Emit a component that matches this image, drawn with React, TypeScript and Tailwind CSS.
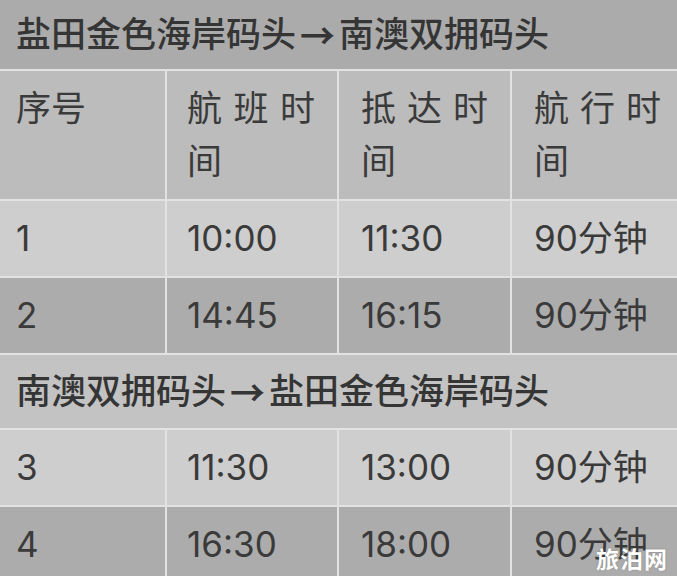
import React from 'react';

type Row = { no: string; dep: string; arr: string; dur: string; dark?: boolean };

const outbound: Row[] = [
  { no: '1', dep: '10:00', arr: '11:30', dur: '90分钟' },
  { no: '2', dep: '14:45', arr: '16:15', dur: '90分钟', dark: true },
];

const inbound: Row[] = [
  { no: '3', dep: '11:30', arr: '13:00', dur: '90分钟' },
  { no: '4', dep: '16:30', arr: '18:00', dur: '90分钟', dark: true },
];

const font = { fontFamily: '"Inter", "Noto Sans CJK SC", sans-serif' };

const Title: React.FC<{ from: string; to: string; className: string }> = ({ from, to, className }) => (
  <div className={`col-span-4 flex items-center pl-[16px] text-[35px] font-medium text-[#353535] ${className}`}>
    {from}
    <span className="px-[4px] font-bold" style={{ fontFamily: '"Noto Sans CJK SC", sans-serif' }}>→</span>
    {to}
  </div>
);

const DataRow: React.FC<{ row: Row }> = ({ row }) => {
  const bg = row.dark ? 'bg-[#acacac]' : 'bg-[#cecece]';
  return (
    <>
      <div className={`${bg} pl-[16px] py-[11px] leading-[53px]`}>{row.no}</div>
      <div className={`${bg} pl-[20px] py-[11px] leading-[53px]`}>{row.dep}</div>
      <div className={`${bg} pl-[22px] py-[11px] leading-[53px]`}>{row.arr}</div>
      <div className={`${bg} pl-[22px] py-[11px] leading-[53px]`}>{row.dur}</div>
    </>
  );
};

export default function App() {
  return (
    <div className="relative w-[677px] h-[576px] overflow-hidden bg-[#e2e2e2]" style={font}>
      <div className="grid grid-cols-[165px_170px_171px_165px] gap-[2px] text-[35px] text-[#3a3a3a]">
        <Title from="盐田金色海岸码头" to="南澳双拥码头" className="h-[69px] bg-[#ababab]" />

        <div className="bg-[#bcbcbc] pl-[16px] py-[11px] leading-[53px]">序号</div>
        <div className="bg-[#bcbcbc] pl-[20px] pr-[22px] py-[11px] leading-[53px] text-justify">航班时间</div>
        <div className="bg-[#bcbcbc] pl-[22px] pr-[22px] py-[11px] leading-[53px] text-justify">抵达时间</div>
        <div className="bg-[#bcbcbc] pl-[22px] pr-[16px] py-[11px] leading-[53px] text-justify">航行时间</div>

        {outbound.map((r) => (
          <DataRow key={r.no} row={r} />
        ))}

        <Title from="南澳双拥码头" to="盐田金色海岸码头" className="h-[73px] bg-[#c3c3c3]" />

        {inbound.map((r) => (
          <DataRow key={r.no} row={r} />
        ))}
      </div>

      {/* watermark */}
      <div
        className="absolute right-[9px] bottom-[1px] text-[23px] font-bold tracking-[1px] text-white"
        style={{ fontFamily: '"Noto Sans CJK SC", sans-serif', textShadow: '0 0 2px rgba(0,0,0,0.25)' }}
      >
        旅泊网
      </div>
    </div>
  );
}
